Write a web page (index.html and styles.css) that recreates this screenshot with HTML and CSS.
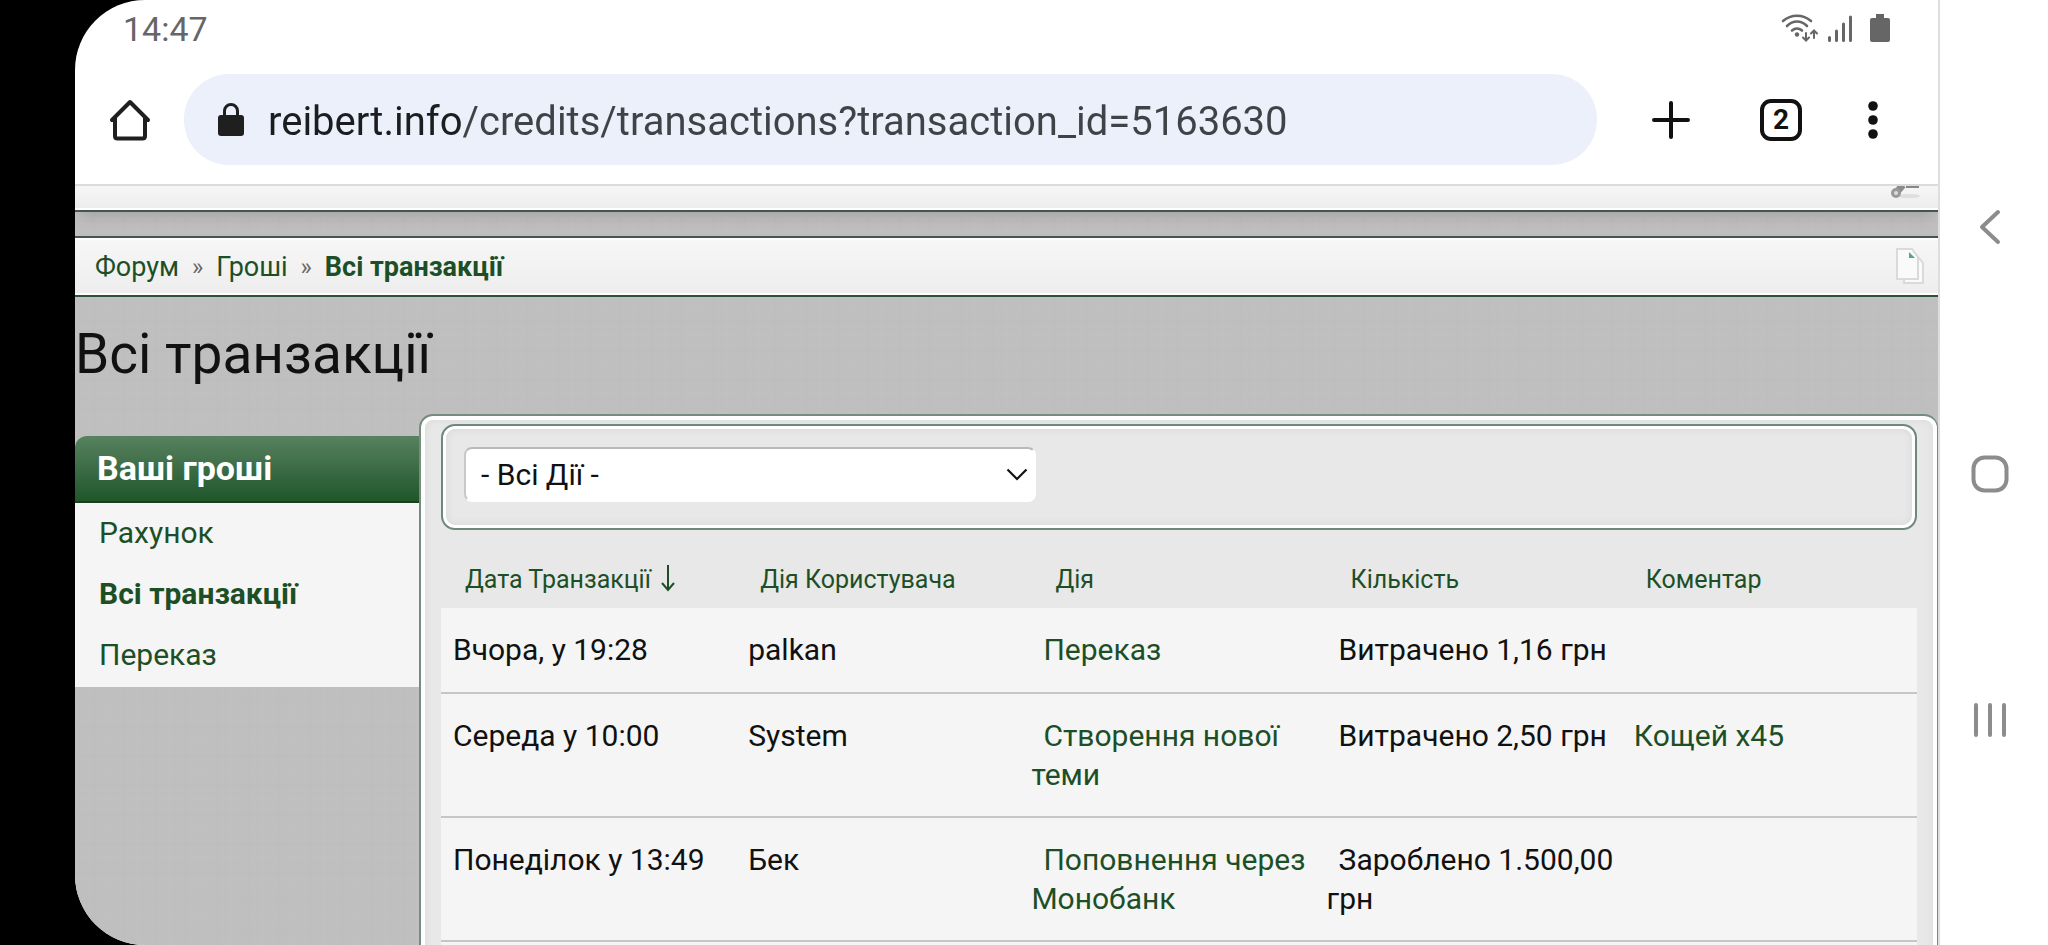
FILE: index.html
```html
<!DOCTYPE html>
<html lang="uk">
<head>
<meta charset="utf-8">
<meta name="viewport" content="width=device-width, initial-scale=1">
<title>Всі транзакції</title>
<link rel="stylesheet" href="styles.css">
</head>
<body>
<div class="device">
  <div class="screen">
    <div class="status">
      <time class="clock">14:47</time>
      <div class="status-icons">
        <svg width="40" height="30" viewBox="0 0 40 30" fill="none" stroke="#666" stroke-width="2.600" stroke-linecap="round">
          <path d="M3 7C11 0 23 0 31 7"/><path d="M7 12C13 6 21 6 27 12"/><path d="M12 16.500C15 14 19 14 22 16.500"/>
          <circle cx="17" cy="20.500" r="2.200" fill="#666" stroke="none"/>
          <g stroke-width="2"><path d="M26 19v7M23 23.500l3 3 3-3"/><path d="M34 24v-7M31 19.500l3-3 3 3"/></g>
        </svg>
        <svg width="26" height="30" viewBox="0 0 26 30" fill="none" stroke="#666" stroke-width="3" stroke-linecap="round"><path d="M2.500 23.500v3M9.500 17v9.500M16.500 10v16.500M23.500 3v23.500"/></svg>
        <svg width="20" height="30" viewBox="0 0 20 30" fill="#666"><path d="M6 0h8v4h4a2 2 0 0 1 2 2v20a2 2 0 0 1-2 2H2a2 2 0 0 1-2-2V6a2 2 0 0 1 2-2h4z"/></svg>
      </div>
    </div>
    <header class="toolbar">
      <button class="tool" aria-label="Home"><svg width="42" height="42" viewBox="0 0 42 42" fill="none" stroke="#1f1f1f" stroke-width="4" stroke-linejoin="round" stroke-linecap="round"><path d="M3 21L21 3l18 18M6 19v18q0 2.500 2.500 2.500h25q2.500 0 2.500-2.500V19"/></svg></button>
      <label class="omnibox">
        <svg width="26" height="34" viewBox="0 0 26 34"><rect x="0" y="12" width="26" height="21" rx="3" fill="#1f1f1f"/><path d="M6.500 13V8a6.500 6.500 0 0 1 13 0v5" fill="none" stroke="#1f1f1f" stroke-width="3"/></svg>
        <input class="url" type="text" aria-label="URL" value="reibert.info/credits/transactions?transaction_id=5163630">
      </label>
      <div class="actions">
        <button class="tool" aria-label="New tab"><svg width="38" height="38" viewBox="0 0 38 38" stroke="#111" stroke-width="4" stroke-linecap="round"><path d="M19 2v34M2 19h34"/></svg></button>
        <button class="tool tabs" aria-label="Tabs">2</button>
        <button class="tool" aria-label="Menu"><svg width="12" height="38" viewBox="0 0 12 38" fill="#111"><circle cx="6" cy="5" r="4.800"/><circle cx="6" cy="19" r="4.800"/><circle cx="6" cy="33" r="4.800"/></svg></button>
      </div>
    </header>
    <main class="page">
      <div class="topband">
        <svg width="32" height="14" viewBox="0 0 32 14"><ellipse cx="19" cy="10" rx="11" ry="2" fill="#dedede"/><path d="M5 8L13-1" stroke="#8c8c8c" stroke-width="7"/><circle cx="6" cy="7" r="5" fill="#999"/><circle cx="6" cy="7" r="2" fill="#ddd"/><path d="M16 1h13" stroke="#888" stroke-width="2"/></svg>
      </div>
      <nav class="crumbs">
        <a href="#">Форум</a><span class="sep">»</span><a href="#">Гроші</a><span class="sep">»</span><a class="current" href="#">Всі транзакції</a>
        <button class="jump" aria-label="Quick navigation"><svg width="28" height="38" viewBox="0 0 28 38" stroke="#dadada" stroke-width="2" fill="#fafafa"><path d="M8 10h15l4 5v20H8z"/><path d="M1 1h15l6 8v22H1z"/><path d="M13 4l6 6h-6z" fill="#4cae7d" stroke="none"/></svg></button>
      </nav>
      <h1 class="title">Всі транзакції</h1>
      <div class="columns">
        <aside class="side">
          <h2 class="side-head">Ваші гроші</h2>
          <ul class="side-list">
            <li><a href="#">Рахунок</a></li>
            <li><a class="current" href="#">Всі транзакції</a></li>
            <li><a href="#">Переказ</a></li>
          </ul>
        </aside>
        <section class="panel">
          <form class="filter">
            <div class="picker">
              <select aria-label="Дії"><option>- Всі Дії -</option></select>
              <svg class="chevron" width="22" height="14" viewBox="0 0 22 14" fill="none" stroke="#111" stroke-width="2.200"><path d="M1.500 1.500L11 11l9.500-9.500"/></svg>
            </div>
          </form>
          <table class="log">
            <thead>
              <tr>
                <th><a href="#">Дата Транзакції <svg width="14" height="28" viewBox="0 0 14 28" fill="none" stroke="#1d4f27" stroke-width="2"><path d="M7 1v24M1 19l6 7 6-7"/></svg></a></th>
                <th><a href="#">Дія Користувача</a></th><th><a href="#">Дія</a></th><th><a href="#">Кількість</a></th><th><a href="#">Коментар</a></th>
              </tr>
            </thead>
            <tbody>
              <tr><td>Вчора, у 19:28</td><td>palkan</td><td class="lead"><a href="#">Переказ</a></td><td class="lead">Витрачено 1,16 грн</td><td></td></tr>
              <tr><td>Середа у 10:00</td><td>System</td><td class="lead"><a href="#">Створення нової теми</a></td><td class="lead">Витрачено 2,50 грн</td><td><a href="#">Кощей x45</a></td></tr>
              <tr><td>Понеділок у 13:49</td><td>Бек</td><td class="lead"><a href="#">Поповнення через Монобанк</a></td><td class="lead">Зароблено 1.500,00 грн</td><td></td></tr>
              <tr><td></td><td></td><td></td><td></td><td></td></tr>
            </tbody>
          </table>
        </section>
      </div>
    </main>
  </div>
  <nav class="softkeys">
    <button class="tool" aria-label="Back"><svg width="24" height="36" viewBox="0 0 24 36" fill="none" stroke="#8c8c8c" stroke-width="4" stroke-linecap="round" stroke-linejoin="round"><path d="M20 3L4 18l16 15"/></svg></button>
    <button class="tool" aria-label="Home screen"><svg width="38" height="38" viewBox="0 0 38 38" fill="none" stroke="#8c8c8c" stroke-width="4"><rect x="2.500" y="2.500" width="33" height="33" rx="11"/></svg></button>
    <button class="tool" aria-label="Recent apps"><svg width="36" height="36" viewBox="0 0 36 36" stroke="#8c8c8c" stroke-width="4" stroke-linecap="round"><path d="M4 3v30M18 3v30M32 3v30"/></svg></button>
  </nav>
</div>
</body>
</html>
```
FILE: styles.css
```css
* { box-sizing: border-box; }
body { margin: 0; font-family: Roboto, "Liberation Sans", sans-serif; color: #111; background: #000; }
a { color: #1d4f27; text-decoration: none; }
svg { display: block; }
h1, h2, ul { margin: 0; padding: 0; }
.tool { border: 0; padding: 0; background: none; font-family: inherit; color: #111; }

.device { display: grid; grid-template-columns: minmax(0, 1fr) 110px; height: 100vh; padding-left: 75px; overflow: hidden; background: linear-gradient(90deg, #000 50%, #fff 50%); }
.screen { display: flex; flex-direction: column; overflow: hidden; background: #fff; border-radius: 70px 0 0 70px; }

.status { display: flex; justify-content: space-between; align-items: center; height: 58px; padding: 0 48px; }
.clock { font-size: 34px; line-height: 40px; color: #666; }
.status-icons { display: flex; gap: 7px; align-items: center; }
.status-icons svg:last-child { margin-left: 10px; }

.toolbar { display: flex; align-items: center; height: 128px; padding: 0 59px 3px 34px; border-bottom: 2px solid #dcdcdc; }
.omnibox { display: flex; flex: 1; align-items: center; gap: 24px; height: 91px; margin-left: 33px; padding-left: 34px; border-radius: 45px; background: #ebf0fa; }
.url { flex: 1; min-width: 0; padding: 4px 0 0; border: 0; outline: 0; font-family: inherit; font-size: 40px; line-height: 48px; color: transparent; background: linear-gradient(90deg, #1c1d20 195px, #3f4347 195px); background-clip: text; -webkit-background-clip: text; }
.actions { display: flex; align-items: center; margin-left: 55px; }
.tabs { width: 42px; height: 42px; margin: 0 65px 0 70px; border: 4px solid #111; border-radius: 11px; font-size: 28px; line-height: 34px; font-weight: 700; }

.page {
  display: flex; flex: 1; flex-direction: column; min-height: 0;
  background:
    repeating-linear-gradient(90deg, rgba(255,255,255,.02) 0 2px, transparent 2px 17px, rgba(0,0,0,.008) 17px 20px, transparent 20px 31px),
    repeating-linear-gradient(0deg, rgba(255,255,255,.02) 0 2px, transparent 2px 13px, rgba(0,0,0,.008) 13px 16px, transparent 16px 29px),
    #bfbfbf;
}
.topband { display: flex; flex-shrink: 0; justify-content: flex-end; height: 26px; padding-right: 16px; border-bottom: 2px solid #43574d; background: linear-gradient(#f6f6f6, #ececec); box-shadow: inset 0 -2px #fff, 0 8px 16px -4px rgba(0,0,0,.15); }
.crumbs { display: flex; flex-shrink: 0; align-items: center; height: 61px; margin-top: 24px; padding: 0 14px 0 20px; border-top: 2px solid #43574d; border-bottom: 2px solid #2c5238; background: linear-gradient(#f7f7f7, #ededed); box-shadow: inset 0 2px #fff, inset 0 -2px #fff; font-size: 27px; line-height: 32px; }
.current { font-weight: 700; }
.sep { margin: 0 13px; font-size: 24px; color: #666; }
.jump { margin-left: auto; padding: 0; border: 0; background: none; }
.title { padding: 24px 0 27px; font-size: 55px; line-height: 66px; font-weight: 400; }

.columns { display: grid; flex: 1; grid-template-columns: 344px minmax(0, 1fr); min-height: 0; }
.side { padding-top: 22px; }
.side-head { height: 67px; padding: 0 22px; border-bottom: 2px solid #173f20; border-radius: 12px 0 0 0; background: linear-gradient(#57825f, #20562a); font-size: 34px; line-height: 64px; color: #fff; }
.side-list { padding-bottom: 2px; list-style: none; background: #f5f5f5; font-size: 30px; line-height: 60px; }
.side-list li + li { padding-top: 1px; }
.side-list a { display: block; padding-left: 24px; }

.panel { padding: 8px 20px 0; border: solid #758c7e; border-width: 2px 1px 0 2px; border-radius: 14px 14px 0 0; background: #e8e8e8; box-shadow: inset 0 0 0 4px #fff, inset 0 0 10px 4px rgba(0,0,0,.06); }
.filter { height: 106px; padding: 21px; border: 2px solid #6e897a; border-radius: 14px; box-shadow: inset 0 0 0 3px #fff, inset 0 0 8px 4px rgba(0,0,0,.06); }
.picker { position: relative; width: 40%; min-width: 300px; }
.picker select { width: 100%; height: 55px; padding: 0 15px; border: 2px solid #b9b9b9; border-color: #b9b9b9 #fff #fff #c8c8c8; border-radius: 8px; appearance: none; background: #fff; color: #111; font-family: inherit; font-size: 30px; line-height: 36px; }
.chevron { position: absolute; right: 8px; top: 21px; pointer-events: none; }

.log { width: 100%; table-layout: fixed; border-collapse: separate; border-spacing: 0; }
.log th { height: 78px; padding: 22px 0 0 24px; text-align: left; font-size: 25px; line-height: 32px; font-weight: 400; white-space: nowrap; }
.log th svg { display: inline-block; margin-left: 4px; vertical-align: -4px; }
.log td { height: 86px; padding: 22px 12px; border-bottom: 2px solid #c6c6c6; background: #f5f5f5; vertical-align: top; font-size: 30px; line-height: 39px; }
.log .lead { padding-right: 0; padding-left: 0; text-indent: 12px; }

.softkeys { display: flex; flex-direction: column; align-items: center; justify-content: space-between; padding: 209px 8px 207px 0; border-left: 2px solid #dedede; background: #fff; }
```
